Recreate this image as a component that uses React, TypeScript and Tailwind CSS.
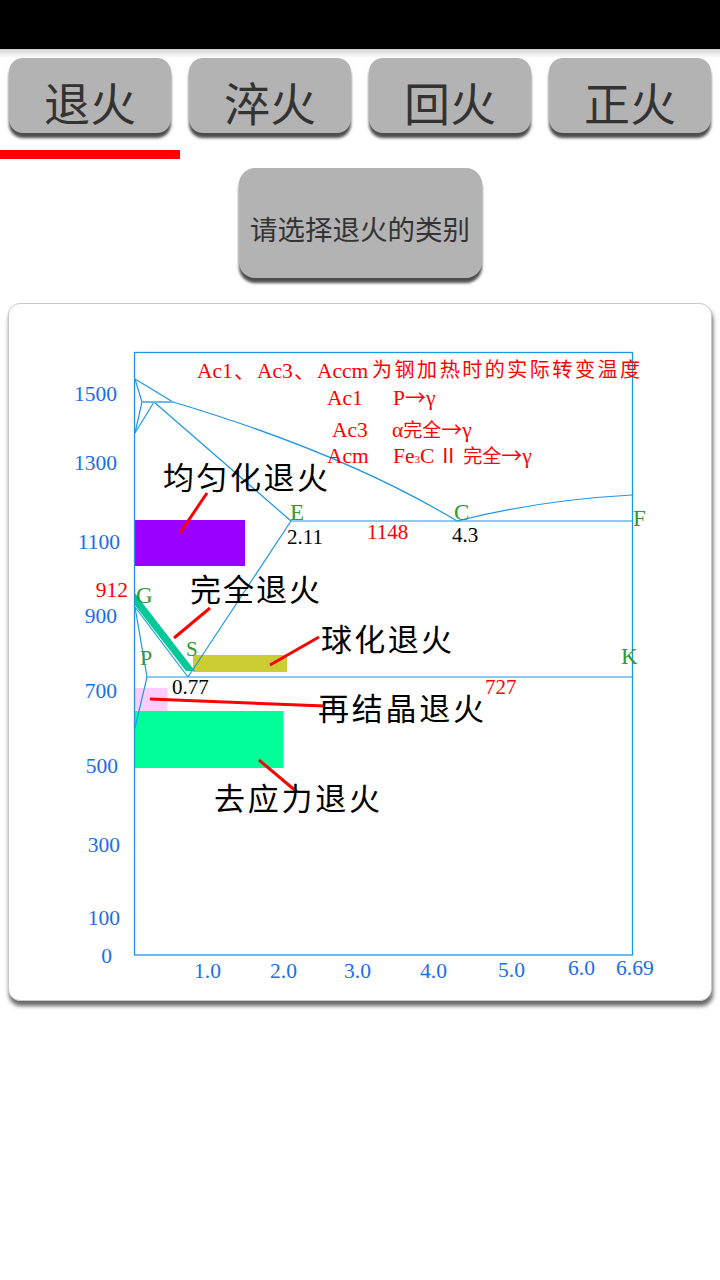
import React from 'react';

const tabs = ['退火', '淬火', '回火', '正火'];

const LINE = '#1e96e6';
const BLUE = '#1a6ee8';
const RED = '#ff0000';
const GREEN = '#339933';
const SERIF = "'Liberation Serif', 'Noto Sans CJK SC', serif";
const CJK = "'Noto Sans CJK SC', sans-serif";

const yLabels: [string, number, number, string][] = [
  ['1500', 117, 401, BLUE],
  ['1300', 117, 470, BLUE],
  ['1100', 120, 549, BLUE],
  ['912', 128, 597, RED],
  ['900', 117, 623, BLUE],
  ['700', 117, 698, BLUE],
  ['500', 118, 773, BLUE],
  ['300', 120, 852, BLUE],
  ['100', 120, 925, BLUE],
  ['0', 112, 963, BLUE],
];

const xLabels: [string, number, number][] = [
  ['1.0', 194, 978],
  ['2.0', 270, 978],
  ['3.0', 344, 978],
  ['4.0', 420, 978],
  ['5.0', 498, 977],
  ['6.0', 568, 975],
  ['6.69', 616, 975],
];

const points: [string, number, number, number][] = [
  ['E', 290, 520, 23],
  ['C', 454, 520, 23],
  ['F', 633, 526, 23],
  ['G', 136, 603, 23],
  ['S', 186, 656, 21],
  ['P', 140, 665, 22],
  ['K', 621, 664, 23],
];

const labels: [string, number, number, number][] = [
  ['均匀化退火', 163, 489, 165],
  ['完全退火', 190, 601, 130],
  ['球化退火', 321, 651, 131],
  ['再结晶退火', 318, 720, 166],
  ['去应力退火', 214, 810, 166],
];

const pointers: [number, number, number, number][] = [
  [207, 493, 180, 533],
  [210, 608, 174, 638],
  [319, 637, 270, 665],
  [150, 699, 325, 706],
  [259, 760, 297, 792],
];

function Arrow() {
  return <tspan fontFamily={CJK} fontSize="21">→</tspan>;
}

function Diagram() {
  return (
    <svg width="702" height="696" viewBox="9 304 702 696" className="block">
      {/* annealing ranges */}
      <rect x="134.5" y="520" width="110.5" height="46" fill="#9900ff" />
      <rect x="193" y="655" width="94" height="17" fill="#cccc33" />
      <rect x="134.5" y="688" width="33" height="23" fill="#ffccff" />
      <rect x="134.5" y="711" width="149" height="57" fill="#00ff99" />
      <polygon points="134,592 195,671 186,671 134,604" fill="#00c896" />

      {/* Fe-C lines */}
      <g fill="none" stroke={LINE} strokeWidth="1.2">
        <polyline points="135,379 173,402" />
        <path d="M173 402 Q344 453 457 521" />
        <polyline points="135,379 142,402 135,433" />
        <line x1="154" y1="402" x2="135" y2="433" />
        <line x1="154" y1="402" x2="291" y2="521" />
        <line x1="291" y1="521" x2="632" y2="521" />
        <path d="M457 521 Q540 500 632 495" />
        <line x1="291" y1="521" x2="188" y2="677" />
        <line x1="135" y1="607" x2="188" y2="677" />
        <polyline points="135,607 147,677 135,728" />
        <line x1="147" y1="677" x2="632" y2="677" />
      </g>
      <line x1="142" y1="402" x2="173" y2="402" stroke="#66b8f0" strokeWidth="2" />
      <rect x="134.5" y="352.5" width="498" height="602.5" fill="none" stroke={LINE} strokeWidth="1.3" />

      {/* pointers */}
      <g stroke={RED} strokeWidth="3">
        {pointers.map(([x1, y1, x2, y2], i) => (
          <line key={i} x1={x1} y1={y1} x2={x2} y2={y2} />
        ))}
      </g>

      {/* axis labels */}
      <g fontFamily={SERIF} fontSize="21.5">
        {yLabels.map(([t, x, y, c]) => (
          <text key={t} x={x} y={y} fill={c} textAnchor="end">{t}</text>
        ))}
        {xLabels.map(([t, x, y]) => (
          <text key={t} x={x} y={y} fill={BLUE}>{t}</text>
        ))}
      </g>

      {/* point letters and values */}
      <g fontFamily={SERIF} fill={GREEN}>
        {points.map(([t, x, y, s]) => (
          <text key={t} x={x} y={y} fontSize={s}>{t}</text>
        ))}
      </g>
      <g fontFamily={SERIF} fontSize="21">
        <text x="287" y="544" fill="#000">2.11</text>
        <text x="452" y="542" fill="#000">4.3</text>
        <text x="172" y="694" fill="#000">0.77</text>
        <text x="367" y="539" fill={RED}>1148</text>
        <text x="485" y="694" fill={RED}>727</text>
      </g>

      {/* legend */}
      <g fontFamily={SERIF} fontSize="21.5" fill={RED}>
        <text x="197" y="378">Ac1</text>
        <text x="234" y="378" fontFamily={CJK} fontSize="21">、</text>
        <text x="257" y="378">Ac3</text>
        <text x="294" y="378" fontFamily={CJK} fontSize="21">、</text>
        <text x="317" y="378">Accm</text>
        <text x="372" y="377" fontSize="20" textLength="268" lengthAdjust="spacing">为钢加热时的实际转变温度</text>
        <text x="327" y="405">Ac1</text>
        <text x="393" y="405">P<Arrow />γ</text>
        <text x="332" y="437">Ac3</text>
        <text x="392" y="437">α<tspan fontSize="19">完全</tspan><Arrow />γ</text>
        <text x="327" y="463">Acm</text>
        <text x="393" y="463">Fe<tspan fontSize="11">3</tspan>C<tspan dx="4" fontSize="20">Ⅱ</tspan><tspan dx="5" fontSize="19">完全</tspan><Arrow />γ</text>
      </g>

      <g fontFamily={CJK} fontSize="31" fill="#000">
        {labels.map(([t, x, y, len]) => (
          <text key={t} x={x} y={y} textLength={len} lengthAdjust="spacing">{t}</text>
        ))}
      </g>
    </svg>
  );
}

export default function App() {
  return (
    <div className="w-[720px] h-[1280px] bg-white overflow-hidden font-['Noto_Sans_CJK_SC',sans-serif]">
      <div className="h-[49px] bg-black" />
      <div className="h-[9px] bg-linear-to-b from-[#d2d2d2] to-white" />

      <div className="flex justify-between px-[9px]">
        {tabs.map((t) => (
          <button
            key={t}
            className="w-[162px] h-[75px] rounded-[14px] bg-[#b3b3b3] shadow-[0_5px_3px_rgba(0,0,0,0.7)] flex items-center justify-center pt-[10px] text-[46px] leading-none text-[#333]"
          >
            {t}
          </button>
        ))}
      </div>

      <div className="mt-[17px] w-[180px] h-[9px] bg-[#ff0000]" />

      <div className="mt-[9px] flex justify-center">
        <button className="w-[243px] h-[110px] rounded-[16px] bg-[#b3b3b3] shadow-[0_5px_3px_rgba(0,0,0,0.7)] flex items-center justify-center pt-[12px] text-[27.5px] leading-none text-[#333]">
          请选择退火的类别
        </button>
      </div>

      <div className="mx-2 mt-[25px] h-[698px] rounded-[12px] border border-[#c8c8c8] bg-white shadow-[1px_5px_4px_rgba(0,0,0,0.6)] overflow-hidden">
        <Diagram />
      </div>
    </div>
  );
}
